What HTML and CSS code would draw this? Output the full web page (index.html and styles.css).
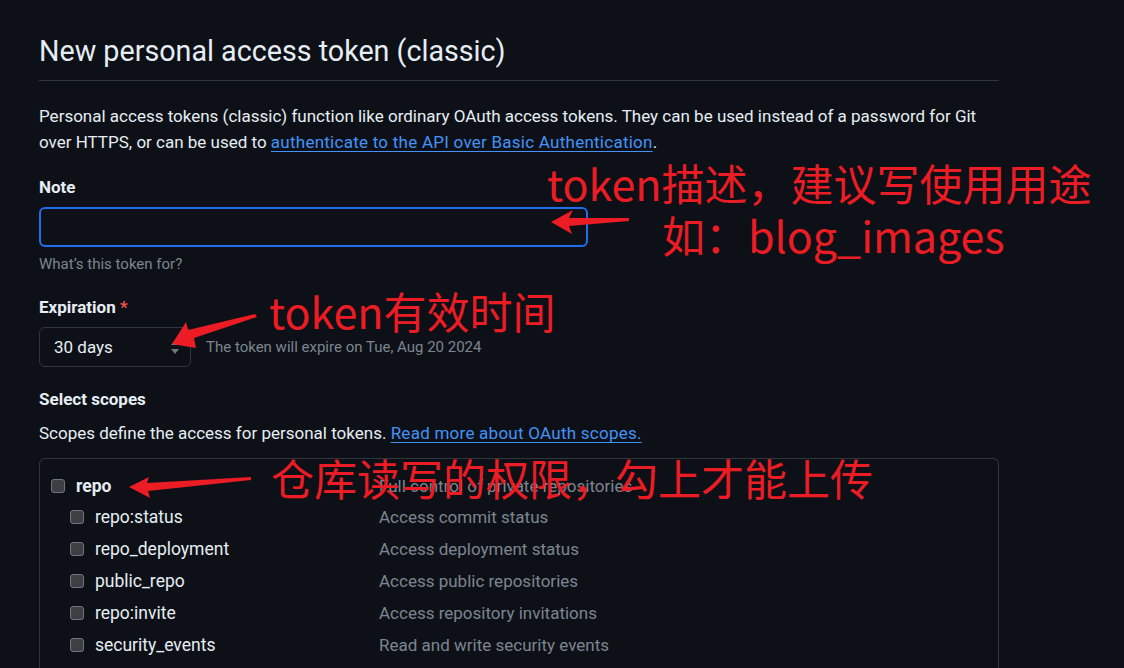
FILE: index.html
```html
<!DOCTYPE html>
<html lang="en">
<head>
<meta charset="utf-8">
<title>New personal access token (classic)</title>
<link rel="stylesheet" href="styles.css">
</head>
<body>
<main class="page">
  <h1 class="title">New personal access token (classic)</h1>
  <p class="intro">Personal access tokens (classic) function like ordinary OAuth access tokens. They can be used instead of a password for Git over HTTPS, or can be used to <a href="#" class="link">authenticate to the API over Basic Authentication</a>.</p>

  <div class="field">
    <label class="label">Note</label>
    <input class="input" type="text">
    <div class="hint">What’s this token for?</div>
  </div>

  <div class="field field-exp">
    <label class="label">Expiration <span class="req">*</span></label>
    <div class="exp-row">
      <div class="select">
        <span>30 days</span>
        <svg class="caret" width="10" height="16" viewBox="0 0 10 16"><path d="M5 1 L9 6 H1 Z M5 15 L9 10 H1 Z" fill="#6e7681"/></svg>
      </div>
      <span class="exp-note">The token will expire on Tue, Aug 20 2024</span>
    </div>
  </div>

  <h2 class="label scopes-title">Select scopes</h2>
  <p class="scopes-desc">Scopes define the access for personal tokens. <a href="#" class="link">Read more about OAuth scopes.</a></p>

  <div class="scopes">
    <div class="row top">
      <div class="name"><span class="cb"></span><strong>repo</strong></div>
      <div class="desc">Full control of private repositories</div>
    </div>
    <div class="row sub">
      <div class="name"><span class="cb"></span>repo:status</div>
      <div class="desc">Access commit status</div>
    </div>
    <div class="row sub">
      <div class="name"><span class="cb"></span>repo_deployment</div>
      <div class="desc">Access deployment status</div>
    </div>
    <div class="row sub">
      <div class="name"><span class="cb"></span>public_repo</div>
      <div class="desc">Access public repositories</div>
    </div>
    <div class="row sub">
      <div class="name"><span class="cb"></span>repo:invite</div>
      <div class="desc">Access repository invitations</div>
    </div>
    <div class="row sub">
      <div class="name"><span class="cb"></span>security_events</div>
      <div class="desc">Read and write security events</div>
    </div>
  </div>
</main>

<div class="notes">
  <svg class="arrows" width="1124" height="668" viewBox="0 0 1124 668">
    <polygon points="551,222 573,210 569,218 629,218 629,221 569,226 572,234" fill="#ec1c24"/>
    <polygon points="172,344 186,322 188,330 255,314 257,317 194,338 196,348" fill="#ec1c24"/>
    <polygon points="129,487 149,477 147,483 251,477 251,480 148,491 150,498" fill="#ec1c24"/>
  </svg>
  <div class="note n1">token描述，建议写使用用途</div>
  <div class="note n2">如：blog_images</div>
  <div class="note n3">token有效时间</div>
  <div class="note n4">仓库读写的权限，勾上才能上传</div>
</div>
</body>
</html>
```

FILE: styles.css
```css
html, body {
  margin: 0;
  padding: 0;
  background: #0d1117;
}
body {
  font-family: Roboto, "Noto Sans", "Liberation Sans", sans-serif;
  color: #e6edf3;
  font-size: 17px;
  position: relative;
  width: 1124px;
  height: 668px;
  overflow: hidden;
}
.page {
  width: 960px;
  padding: 33px 0 0 39px;
}
.title {
  margin: 0;
  font-size: 28.7px;
  font-weight: 400;
  line-height: 36px;
  padding-bottom: 11px;
  border-bottom: 1px solid #30363d;
}
.intro {
  margin: 22px 0 0;
  line-height: 26px;
}
.link {
  color: #4493f8;
  text-decoration: underline;
  text-underline-offset: 3px;
  letter-spacing: 0.25px;
}
.field {
  margin-top: 20px;
  display: flex;
  flex-direction: column;
}
.field-exp {
  margin-top: 21px;
}
.label {
  display: block;
  font-size: 17px;
  font-weight: 700;
  line-height: 24px;
  margin: 0;
}
.req {
  color: #f85149;
}
.input {
  margin-top: 8px;
  width: 549px;
  height: 40px;
  box-sizing: border-box;
  background: #0d1117;
  border: 2px solid #1f6feb;
  border-radius: 6px;
  outline: none;
}
.hint {
  margin-top: 7px;
  font-size: 15px;
  line-height: 20px;
  color: #7d8590;
}
.exp-row {
  margin-top: 8px;
  display: flex;
  align-items: center;
  gap: 15px;
}
.select {
  width: 152px;
  height: 40px;
  box-sizing: border-box;
  border: 1px solid #30363d;
  border-radius: 6px;
  display: flex;
  align-items: center;
  justify-content: space-between;
  padding: 0 10px 0 14px;
  font-size: 17px;
}
.exp-note {
  font-size: 15px;
  color: #7d8590;
}
.scopes-title {
  margin-top: 20px;
}
.scopes-desc {
  margin: 10px 0 0;
  line-height: 24px;
}
.scopes {
  margin-top: 13px;
  border: 1px solid #30363d;
  border-bottom: none;
  border-radius: 6px 6px 0 0;
  padding: 11px 0 0 11px;
  height: 220px;
}
.row {
  display: grid;
  grid-template-columns: 328px 1fr;
  height: 32px;
  align-items: center;
}
.row.top {
  height: 31px;
}
.name {
  display: flex;
  align-items: center;
  gap: 11px;
  font-size: 17.5px;
}
.sub .name {
  padding-left: 19px;
  gap: 11px;
}
.cb {
  width: 14px;
  height: 14px;
  box-sizing: border-box;
  background: #3d3f42;
  border: 1px solid #6e7681;
  border-radius: 3px;
  flex: none;
}
.desc {
  color: #7d8590;
  font-size: 17px;
}
.notes {
  position: absolute;
  left: 0;
  top: 0;
  width: 1124px;
  height: 668px;
  pointer-events: none;
}
.arrows {
  position: absolute;
  left: 0;
  top: 0;
}
.note {
  position: absolute;
  color: #ec1c24;
  font-family: "Noto Sans CJK SC", "Noto Sans", sans-serif;
  font-size: 43px;
  line-height: 44px;
  white-space: nowrap;
}
.n1 { left: 547px; top: 160px; }
.n2 { left: 662px; top: 212px; }
.n3 { left: 269px; top: 288px; }
.n4 { left: 271px; top: 455px; }
```
